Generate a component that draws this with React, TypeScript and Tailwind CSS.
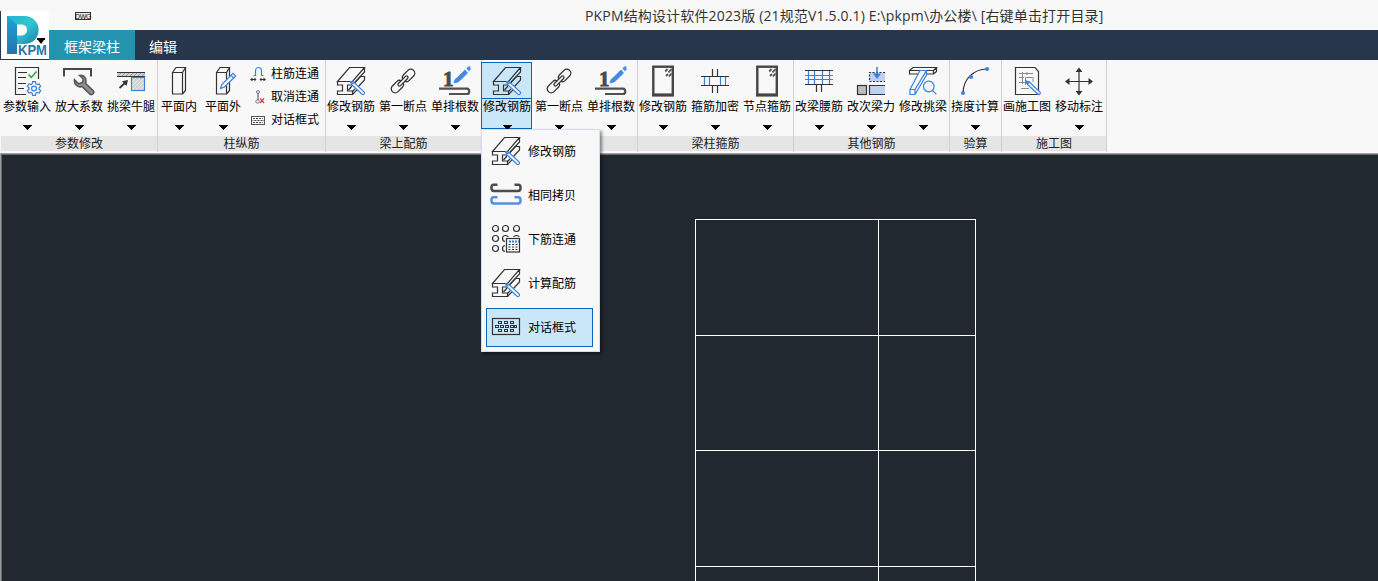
import type { ReactNode } from "react";

const K = "#333";
const B = "#3a80dd";

function Icon({ children }: { children: ReactNode }) {
  return (
    <svg width="32" height="32" viewBox="0 0 32 32" fill="none" stroke={K} strokeWidth="1.2" className="block shrink-0">
      {children}
    </svg>
  );
}

function SmallIcon({ children }: { children: ReactNode }) {
  return (
    <svg width="16" height="16" viewBox="0 0 16 16" fill="none" stroke={K} strokeWidth="1" className="block shrink-0">
      {children}
    </svg>
  );
}

const ParamIcon = () => (
  <Icon>
    <path d="M15 29.5H4.5V2.5H27.5V14" />
    <path d="M7 7.5H16M7 12.5H15M7 18.5H15M7 23.5H13" />
    <path d="M17.5 9.5L20.3 12.5L25.5 6.5" stroke="#2f9e3a" strokeWidth="1.5" />
    <path
      stroke={B}
      d="M21.6 16.7h2.8l.5 2.2 1.2.7 2.1-.7 1.4 2.4-1.6 1.5v1.4l1.6 1.5-1.4 2.4-2.1-.7-1.2.7-.5 2.2h-2.8l-.5-2.2-1.2-.7-2.1.7-1.4-2.4 1.6-1.5v-1.4l-1.6-1.5 1.4-2.4 2.1.7 1.2-.7z"
    />
    <circle cx="23" cy="23.5" r="2.4" stroke={B} />
  </Icon>
);

const WrenchIcon = () => (
  <Icon>
    <path d="M1 11.5V4H28V11.5" stroke="#484848" strokeWidth="2" />
    <path
      fill="#909090"
      stroke="#5a5a5a"
      strokeWidth="1.6"
      d="M16.500 10.500c3.500-.8 6.500 1.700 6.500 5.200 0 1-.2 1.800-.5 2.600l7.800 7.500c1.500 2-1 4.900-3.400 3.300l-7.600-7.500c-4.300 1.300-8.500-2-7.800-6.800l4 4 4-1.200.8-3.600z"
    />
  </Icon>
);

const CorbelIcon = () => (
  <Icon>
    <rect x="2" y="7" width="28" height="5" fill="#d0d0d0" stroke="none" />
    <path d="M3 11l3-3M7 11l3-3M11 11l3-3M15 11l3-3M19 11l3-3M23 11l3-3M27 11l3-3" stroke="#888" strokeWidth=".7" />
    <path d="M2 7.500H30M2 11.500H30" strokeWidth="1" />
    <path d="M4.500 23L11 17" strokeWidth="1.800" />
    <path d="M13 15L11.500 21L7 16.300Z" fill={K} stroke="none" />
    <rect x="16.500" y="12.500" width="13" height="13" fill="#d3d3d3" stroke={B} />
    <path d="M17 17l4-4M17 21l8-8M17 25l12-12M21 25l8-8M25 25l4-4" stroke="#eee" strokeWidth=".8" />
  </Icon>
);

const columnPath = "M9.500 7.500H19.500V29H9.500ZM9.500 7.500L13 2.500H22.500L19.500 7.500M22.500 2.500V25.500L19.500 29";

const ColumnIcon = () => (
  <Icon>
    <path d={columnPath} />
  </Icon>
);

const ColumnEditIcon = () => (
  <Icon>
    <path d={columnPath} />
    <path d="M13.500 23.500L14.800 19.500L26 8.300L28.700 11L17.500 22Z" fill="#f8f8f8" stroke={B} />
    <path d="M24 10.300L26.700 13" stroke={B} />
  </Icon>
);

const BeamIcon = () => (
  <Icon>
    <path d="M2.500 16.500L14.500 2.500H29.500L17.500 16.500ZM2.500 16.500V20H7.500V26H2.500V29.500H17.500V26H12.500V20H17.500V16.500M17.500 20L29.500 7V2.500" />
    <path d="M13.500 25L17 21M19 18.500L25.500 11.500H29.500V15L23.500 21.500M17.500 26.500L20 24M17.500 29.500L22 24.800" />
    <path d="M15.500 16.500L18.500 17L29.300 27C30 28.800 28.500 30 27 29.300L16.500 19.500Z" fill="#f3f8fc" stroke={B} />
    <path d="M16 17L18.500 19" stroke={B} />
  </Icon>
);

const LinkIcon = () => (
  <Icon>
    <g transform="rotate(-45 16 16)" strokeWidth="1.300">
      <path d="M14.700 14.300C14.300 13 13 12 11.500 12H5A4 4 0 0 0 5 20H11.500C13 20 14.300 19 14.700 17.700" />
      <path d="M17.300 14.300C17.700 13 19 12 20.500 12H27A4 4 0 0 1 27 20H20.500C19 20 17.700 19 17.300 17.700" />
      <rect x="9.500" y="14.500" width="13" height="3" rx="1.500" />
    </g>
  </Icon>
);

const CountIcon = () => (
  <Icon>
    <text x="4" y="21" fill="#4a4a4a" stroke="#4a4a4a" strokeWidth=".9" fontSize="21" fontWeight="700" fontFamily="Liberation Serif, serif">
      1
    </text>
    <path d="M15 17.800C15.500 15 16.500 13.500 19 12L26 5L28.500 8L21.500 15C19.500 17 17.500 17.800 15 17.800Z" fill="#4389e4" stroke="#4389e4" strokeWidth=".8" />
    <path d="M27.500 3.500L30 6.200L31.500 4.500L31 1L28.500 2.300Z" fill="#4389e4" stroke="#8ab6ef" strokeWidth=".6" />
    <path d="M0 23.700H28C31 24 31 29 28 29H10" stroke="#505050" strokeWidth="2.200" />
  </Icon>
);

const HoopIcon = () => (
  <Icon>
    <rect x="6.300" y="1.700" width="19.500" height="28.300" stroke="#454545" strokeWidth="2.400" />
    <path d="M5 30H27" stroke="#454545" strokeWidth="3" />
    <path d="M18.300 6.500L20.500 4M19 11L21 9M22 11.500L24.500 8.500M21.500 7.500L24.500 4" stroke="#555" strokeWidth="1.900" />
  </Icon>
);

const DenseIcon = () => (
  <Icon>
    <path d="M2 11.500H30M2 20.500H30M13.500 4V11M18.500 4V11M13.500 21V28M18.500 21V28" />
    <path d="M5.500 12V20M10.500 12V20M21.500 12V20M26.500 12V20" stroke={B} />
  </Icon>
);

const WaistIcon = () => (
  <Icon>
    <path d="M2 10.500H30M2 14.500H30M5.500 5V19M11.500 5V19M19.500 5V19M26.500 5V19" stroke={B} />
    <path d="M2 5.500H30M2 19.500H30M13.500 20V27M18.500 20V27" />
  </Icon>
);

const ForceIcon = () => (
  <Icon>
    <path d="M30 7.500H14.500V16.500H30" fill="#bdd2f0" strokeDasharray="2 1.500" />
    <path d="M22 2V11" stroke={B} strokeWidth="1.600" />
    <path d="M18 8.500L22 14L26 8.500Z" fill={B} stroke="none" />
    <rect x="2.500" y="20.500" width="9" height="9" fill="#bdbdbd" />
    <path d="M30 20.500H14.500V29.500H30" fill="#bdd2f0" />
  </Icon>
);

const CantileverIcon = () => (
  <Icon>
    <path d="M2.500 5.500H26.500V9H2.500ZM2.500 5.500L6 2.500H29.500L26.500 5.500M29.500 2.500V6.500L26.500 9" />
    <path d="M3 24.500L13 5.500H19.500L8 24.500V29.500H3ZM3 24.500H8M8 29.500L19.500 10V5.500" fill="#f8f8f8" stroke={B} />
    <circle cx="21.800" cy="21.500" r="5.300" stroke={B} />
    <path d="M25.600 25.300L29.300 29.300" stroke={B} />
  </Icon>
);

const CurveIcon = () => (
  <Icon>
    <path d="M4 28C4.500 14 14 4.500 28 4" />
    <g fill={B} stroke="none">
      <circle cx="4" cy="28" r="2.100" />
      <circle cx="12" cy="12" r="2.100" />
      <circle cx="28" cy="4" r="2.100" />
    </g>
  </Icon>
);

const DrawingIcon = () => (
  <Icon>
    <path d="M4.500 2.500H24L27.500 6.500V29.500H4.500Z" />
    <path d="M8 8.500H22M8 12.500H13M11.500 7V19M8 17.500H14M14.500 20V12.500H22V17M10 23.500H18M16 7V10" stroke="#8a8a8a" strokeWidth="1" />
    <path d="M15 16L18.500 17L29 27C30 28.800 28.500 30 27 29.300L16.500 19.500Z" fill="#e5effc" stroke={B} />
    <path d="M15 16L18 17L16.500 19Z" fill={B} stroke={B} />
  </Icon>
);

const MoveIcon = () => (
  <Icon>
    <path d="M4 16.500H28M16 5V28" />
    <path d="M2 16.500L6.500 13V20ZM30 16.500L25.500 13V20ZM16 2.500L12.500 7H19.500ZM16 30.500L12.500 26H19.500Z" fill={K} stroke="none" />
  </Icon>
);

const CopyIcon = () => (
  <Icon>
    <g strokeWidth="2.500" strokeLinejoin="round">
      <path d="M7.500 5.800H3.500C.800 6 .500 12 4 12H28C31.500 12 31.200 6 28.500 5.800H24.500" stroke="#4c4c4c" />
      <path d="M7.500 18.300H3.500C.800 18.500 .500 24.500 4 24.500H28C31.500 24.500 31.200 18.500 28.500 18.300H24.500" stroke="#5590da" />
    </g>
  </Icon>
);

const ConnectIcon = () => (
  <Icon>
    {[5.5, 15.5, 25.5].map((cy) =>
      [5.5, 15.5, 26.5].map((cx) => <circle key={`${cx}-${cy}`} cx={cx} cy={cy} r="3" />)
    )}
    <rect x="15" y="14" width="17" height="16" fill="#f8f8f8" stroke="none" />
    <rect x="16.500" y="15.500" width="13" height="13.500" />
    <path d="M19 18.500H29" stroke={B} strokeWidth="2" strokeDasharray="2 1" />
    <path d="M18.500 21.500H28.500M18.500 24H28.500M18.500 26.500H28.500" strokeDasharray="2 1.500" />
  </Icon>
);

const DialogIcon = () => (
  <Icon>
    <g strokeWidth="1">
      <rect x="2.500" y="7.500" width="27" height="16" strokeWidth="1.200" />
      {[8.5, 14.5, 20.5].map((x) => (
        <g key={x}>
          <rect x={x} y="10.500" width="3" height="2" />
          <rect x={x} y="18.500" width="3" height="2" />
        </g>
      ))}
      {[5.5, 10.5, 15.5, 20.5, 24.5].map((x) => (
        <rect key={x} x={x} y="14.500" width={x > 24 ? 2 : 3} height="2" />
      ))}
    </g>
  </Icon>
);

const ArchIcon = () => (
  <SmallIcon>
    <path d="M3.500 9.500H5.500V5C5.500 .300 11.500 .300 11.500 5V9.500H13.500" stroke={B} strokeWidth="1.200" />
    <path d="M1 13.500H6M10 13.500H15" />
    <path d="M0 13.500L2.500 11.500V15.500ZM6.500 13.500L4.500 11.500V15.500ZM9.500 13.500L11.500 11.500V15.500ZM16 13.500L13.500 11.500V15.500Z" fill={K} stroke="none" />
  </SmallIcon>
);

const CancelIcon = () => (
  <SmallIcon>
    <circle cx="8" cy="3" r="1.500" stroke="#69788e" />
    <path d="M8 4.500V11" stroke="#7b8696" strokeWidth="1.600" />
    <circle cx="7.500" cy="12.500" r="1.700" stroke="#69788e" />
    <path d="M10 9.500L14 14M14 9.500L10 14" stroke="#d8403c" strokeWidth="1.300" />
  </SmallIcon>
);

const KeysIcon = () => (
  <SmallIcon>
    <rect x="1.500" y="4.500" width="13" height="8" stroke="#555" />
    <path d="M3 6.500H13M3 10.500H13" strokeDasharray="2 1" stroke="#555" />
    <path d="M2.500 8.500H14" strokeDasharray="2 1" strokeDashoffset="1" stroke="#444" />
  </SmallIcon>
);

function Arrow() {
  return (
    <svg width="10" height="5" viewBox="0 0 10 5" className="block shrink-0" shapeRendering="crispEdges">
      <path d="M0 0H10L5 5Z" fill="#000" />
    </svg>
  );
}

type Tool = { label: string; icon: ReactNode; active?: boolean };

function ToolButton({ tool, narrow }: { tool: Tool; narrow?: boolean }) {
  return (
    <button
      className={`relative flex h-[73px] shrink-0 flex-col items-center pt-[5px] ${narrow ? "w-[44px]" : "w-[52px]"}`}
    >
      {tool.active && (
        <span className="absolute top-[2px] left-0 flex h-[67px] w-[51px] flex-col border border-[#0a66bd] bg-[#c9e7f8]">
          <span className="h-[36px] border-b border-[#0a66bd]" />
        </span>
      )}
      <span className="relative flex flex-col items-center">
        {tool.icon}
        <span className="h-[18px] text-[12px] leading-[18px] whitespace-nowrap text-black">{tool.label}</span>
        <span className="mt-[10px]">
          <Arrow />
        </span>
      </span>
    </button>
  );
}

function Group({ label, width, first, children }: { label?: string; width: string; first?: boolean; children: ReactNode }) {
  return (
    <section className={`flex shrink-0 flex-col ${width}`}>
      <div className="flex h-[92px] border-r border-[#d0d0d0]">
        <div className="flex w-full flex-col">
          <div className={`flex h-[73px] ${first ? "" : "-ml-px"}`}>{children}</div>
          <div className="mt-[3px] h-[15px] bg-[#e5e5e5] text-center text-[12px] leading-[13px] text-[#222]">{label}</div>
        </div>
      </div>
    </section>
  );
}

const groups: { id: string; label?: string; width: string; tools: Tool[] }[] = [
  {
    id: "beam-top",
    label: "梁上配筋",
    width: "w-[156px]",
    tools: [
      { label: "修改钢筋", icon: <BeamIcon /> },
      { label: "第一断点", icon: <LinkIcon /> },
      { label: "单排根数", icon: <CountIcon /> },
    ],
  },
  {
    id: "beam-bottom",
    width: "w-[156px]",
    tools: [
      { label: "修改钢筋", icon: <BeamIcon />, active: true },
      { label: "第一断点", icon: <LinkIcon /> },
      { label: "单排根数", icon: <CountIcon /> },
    ],
  },
  {
    id: "hoops",
    label: "梁柱箍筋",
    width: "w-[156px]",
    tools: [
      { label: "修改钢筋", icon: <HoopIcon /> },
      { label: "箍筋加密", icon: <DenseIcon /> },
      { label: "节点箍筋", icon: <HoopIcon /> },
    ],
  },
  {
    id: "other",
    label: "其他钢筋",
    width: "w-[156px]",
    tools: [
      { label: "改梁腰筋", icon: <WaistIcon /> },
      { label: "改次梁力", icon: <ForceIcon /> },
      { label: "修改挑梁", icon: <CantileverIcon /> },
    ],
  },
  { id: "check", label: "验算", width: "w-[52px]", tools: [{ label: "挠度计算", icon: <CurveIcon /> }] },
  {
    id: "drawing",
    label: "施工图",
    width: "w-[105px]",
    tools: [
      { label: "画施工图", icon: <DrawingIcon /> },
      { label: "移动标注", icon: <MoveIcon /> },
    ],
  },
];

const menu: Tool[] = [
  { label: "修改钢筋", icon: <BeamIcon /> },
  { label: "相同拷贝", icon: <CopyIcon /> },
  { label: "下筋连通", icon: <ConnectIcon /> },
  { label: "计算配筋", icon: <BeamIcon /> },
  { label: "对话框式", icon: <DialogIcon />, active: true },
];

function Logo() {
  return (
    <svg width="49" height="49" viewBox="0 0 49 49" className="block">
      <defs>
        <linearGradient id="stem" x1="0" y1="0" x2="0" y2="1">
          <stop offset="0" stopColor="#1fa3d8" />
          <stop offset="1" stopColor="#2472ae" />
        </linearGradient>
        <linearGradient id="bowl" x1="0" y1="0" x2="1" y2="1">
          <stop offset="0" stopColor="#22b3d3" />
          <stop offset=".5" stopColor="#35c6d2" />
          <stop offset="1" stopColor="#167ea6" />
        </linearGradient>
      </defs>
      <rect width="49" height="49" fill="#fff" />
      <path d="M0 0H1V48H49V49H0Z" fill="#27364a" />
      <path d="M7 5H17V43H7Z" fill="url(#stem)" />
      <path d="M7 5H24C43.500 5 43.500 33 24 33H17V24.500H21C29 24.500 29 13.500 21 13.500H17Z" fill="url(#bowl)" />
      <text x="18" y="43.500" fontSize="14" fontWeight="700" fontFamily="Liberation Sans, sans-serif" fill="#2878a8" stroke="#fff" strokeWidth="1.500" paintOrder="stroke" textLength="29" lengthAdjust="spacingAndGlyphs">
        KPM
      </text>
      <path d="M37 27H45V29H44L41 33L38 29H37Z" fill="#000" />
    </svg>
  );
}

export default function App() {
  return (
    <main className="relative flex h-[581px] w-[1378px] flex-col overflow-hidden bg-[#212830] font-['Noto_Sans_CJK_SC',sans-serif]">
      <header className="flex h-[60px] shrink-0 bg-[#f8f8f8]">
        <div className="flex h-[60px] w-[49px] shrink-0 items-end">
          <Logo />
        </div>
        <div className="flex grow flex-col">
          <div className="flex h-[30px]">
            <div className="mt-[12px] ml-[26px] flex h-[8px] w-[16px] items-center justify-center border border-[#333] bg-[#eee] font-['Liberation_Sans',sans-serif] text-[7px] leading-none tracking-[-0.4px] text-[#111]">
              DWG
            </div>
            <h1 className="ml-[494px] text-[14px] leading-[32px] tracking-[0.155px] whitespace-nowrap text-[#333] font-['Open_Sans','Noto_Sans_CJK_SC',sans-serif]">
              PKPM结构设计软件2023版 (21规范V1.5.0.1) E:\pkpm\办公楼\ [右键单击打开目录]
            </h1>
          </div>
          <nav className="flex h-[30px] bg-[#27364a] text-[14px] leading-[32px] text-white">
            <div className="w-[86px] bg-[#2494ae] text-center">框架梁柱</div>
            <div className="w-[56px] text-center">编辑</div>
          </nav>
        </div>
      </header>

      <div className="flex h-[94px] shrink-0 border-b border-[#a0a0a0] bg-[#f8f8f8] pl-px">
        <Group first label="参数修改" width="w-[157px]">
          <ToolButton tool={{ label: "参数输入", icon: <ParamIcon /> }} />
          <ToolButton tool={{ label: "放大系数", icon: <WrenchIcon /> }} />
          <ToolButton tool={{ label: "挑梁牛腿", icon: <CorbelIcon /> }} />
        </Group>
        <Group label="柱纵筋" width="w-[168px]">
          <ToolButton narrow tool={{ label: "平面内", icon: <ColumnIcon /> }} />
          <ToolButton narrow tool={{ label: "平面外", icon: <ColumnEditIcon /> }} />
          <div className="ml-[5px] flex flex-col pt-[2px]">
            {[
              { label: "柱筋连通", icon: <ArchIcon /> },
              { label: "取消连通", icon: <CancelIcon /> },
              { label: "对话框式", icon: <KeysIcon /> },
            ].map((row) => (
              <div key={row.label} className="flex h-[23px] items-center gap-[5px] text-[12px] whitespace-nowrap">
                {row.icon}
                <span className="h-[23px] leading-[21px]">{row.label}</span>
              </div>
            ))}
          </div>
        </Group>
        {groups.map((g) => (
          <Group key={g.id} label={g.label} width={g.width}>
            {g.tools.map((t) => (
              <ToolButton key={t.label} tool={t} />
            ))}
          </Group>
        ))}
      </div>

      <div className="flex grow border-l border-[#a0a0a0]">
        <div className="flex grow border-t border-l border-[#696969] pt-[64px] pl-[693px]">
          <div className="grid h-[464px] w-[281px] shrink-0 grid-cols-[183px_97px] grid-rows-[116px_115px_116px_116px] border-t border-l border-white">
            {Array.from({ length: 8 }, (_, i) => (
              <div key={i} className="border-r border-b border-white" />
            ))}
          </div>
        </div>
      </div>

      <div className="absolute top-[129px] left-[481px] flex h-[223px] w-[119px] flex-col border border-[#c5e4f3] bg-[#f8f8f8] px-[2px] shadow-[2px_2px_3px_rgba(0,0,0,0.45)]">
        {menu.map((m) => (
          <div key={m.label} className="flex h-[44px] shrink-0 items-start pt-[2px] pl-[2px]">
            <div
              className={`flex h-[39px] w-[107px] items-start gap-[6px] border pt-[2px] pl-[3px] text-[12px] leading-[31px] whitespace-nowrap ${
                m.active ? "border-[#0a66bd] bg-[#c9e7f8]" : "border-transparent"
              }`}
            >
              {m.icon}
              {m.label}
            </div>
          </div>
        ))}
      </div>
    </main>
  );
}
